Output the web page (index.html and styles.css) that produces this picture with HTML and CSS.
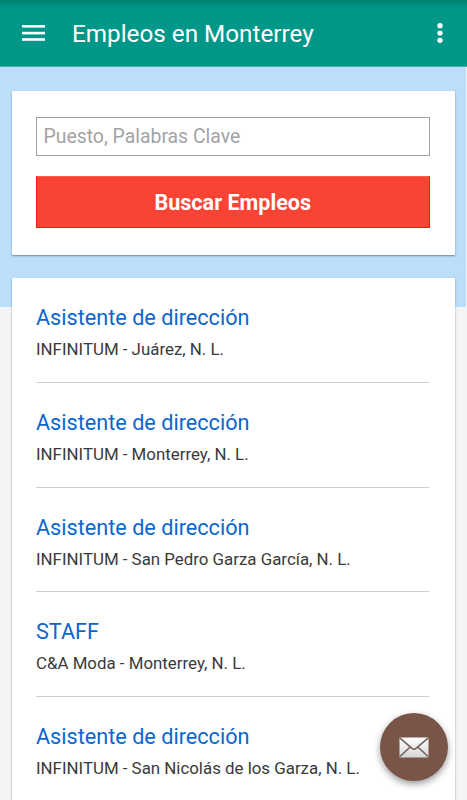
FILE: index.html
```html
<!DOCTYPE html>
<html lang="es">
<head>
    <meta charset="UTF-8">
    <meta name="viewport" content="width=device-width, initial-scale=1.0">
    <title>Empleos en Monterrey</title>
    <link rel="stylesheet" href="styles.css">
</head>
<body>

    <header class="toolbar">
        <button class="icon-btn menu-btn" aria-label="Menú">
            <svg width="23" height="16" viewBox="0 0 23 16" fill="#fff">
                <rect width="23" height="2.6"/>
                <rect y="6.8" width="23" height="2.6"/>
                <rect y="13.2" width="23" height="2.6"/>
            </svg>
        </button>
        <h1 class="title">Empleos en Monterrey</h1>
        <button class="icon-btn more-btn" aria-label="Más opciones">
            <svg width="6" height="20" viewBox="0 0 6 20" fill="#fff">
                <circle cx="3" cy="2.7" r="2.6"/>
                <circle cx="3" cy="10" r="2.6"/>
                <circle cx="3" cy="17.3" r="2.6"/>
            </svg>
        </button>
    </header>

    <main class="content">
        <form class="card search">
            <input class="search-input" type="text" placeholder="Puesto, Palabras Clave">
            <button class="search-btn" type="button">Buscar Empleos</button>
        </form>

        <div class="card jobs">
            <div class="job">
                <a class="job-title">Asistente de dirección</a>
                <p class="job-place">INFINITUM - Juárez, N. L.</p>
            </div>
            <div class="job">
                <a class="job-title">Asistente de dirección</a>
                <p class="job-place">INFINITUM - Monterrey, N. L.</p>
            </div>
            <div class="job">
                <a class="job-title">Asistente de dirección</a>
                <p class="job-place">INFINITUM - San Pedro Garza García, N. L.</p>
            </div>
            <div class="job">
                <a class="job-title">STAFF</a>
                <p class="job-place">C&amp;A Moda - Monterrey, N. L.</p>
            </div>
            <div class="job">
                <a class="job-title">Asistente de dirección</a>
                <p class="job-place">INFINITUM - San Nicolás de los Garza, N. L.</p>
            </div>
        </div>
    </main>

    <button class="fab" aria-label="Correo">
        <svg width="30" height="21" viewBox="0 0 30 21">
            <defs>
                <linearGradient id="paper" x1="0" y1="0" x2="0" y2="1">
                    <stop offset="0" stop-color="#fff"/>
                    <stop offset="1" stop-color="#d6d6d6"/>
                </linearGradient>
            </defs>
            <rect x="0.5" y="0.5" width="29" height="20" rx="1" fill="url(#paper)"/>
            <path d="M1 1.2 L13 11.4 Q15 13 17 11.4 L29 1.2 M1 19.5 L11.2 10 M29 19.5 L18.8 10" fill="none" stroke="#75655d" stroke-width="1.7"/>
        </svg>
    </button>

</body>
</html>
```

FILE: styles.css
```css
* {
    box-sizing: border-box;
}
body {
    font-family: Roboto, "Liberation Sans", sans-serif;
    background: linear-gradient(#bbdefb, #bbdefb) no-repeat 0 0 / 466px 307px, #f4f4f4;
    color: #3a3a3a;
    margin: 0;
    height: 800px;
    overflow: hidden;
}
.toolbar {
    display: flex;
    align-items: center;
    height: 67px;
    padding: 0 24px 0 22px;
    background: linear-gradient(#00806f, #009688 8px);
    border-bottom: 1px solid #5ba8a8;
    color: #fff;
}
.icon-btn {
    display: flex;
    padding: 0;
    border: none;
    background: none;
}
.title {
    flex: 1;
    margin: 2px 0 0 27px;
    font-size: 24.25px;
    font-weight: 400;
    line-height: 30px;
    white-space: nowrap;
}
.content {
    padding: 24px 12.5px 0 12px;
}
.card {
    background: #fff;
    border-radius: 1px;
    box-shadow: 0 1px 2px rgba(0, 0, 0, 0.4);
    padding: 0 26px 0 24px;
}
.search {
    height: 163.5px;
    padding: 26px 24.5px 0 23.5px;
    margin-bottom: 23.5px;
}
.search-input {
    display: block;
    width: 100%;
    height: 39px;
    padding: 0 7px;
    border: 1px solid #a0a0a0;
    border-radius: 0;
    font-family: inherit;
    font-size: 19.4px;
    outline: none;
}
.search-input::placeholder {
    color: #a3a3a3;
}
.search-btn {
    display: block;
    width: 100%;
    height: 52px;
    margin-top: 20px;
    padding: 0;
    border: 1px solid #f0190c;
    border-top-color: #fb5c4e;
    background: #f94435;
    color: #fff;
    font-family: inherit;
    font-size: 21.6px;
    font-weight: 700;
}
.jobs {
    height: 560px;
}
.job {
    height: 104.8px;
    padding-top: 26px;
    border-bottom: 1px solid #ccd0d0;
}
.job-title {
    display: block;
    color: #0b66d0;
    font-size: 21.65px;
    line-height: 28px;
}
.job-place {
    margin: 6px 0 0;
    font-size: 16.86px;
    line-height: 23px;
}
.fab {
    position: fixed;
    right: 19px;
    bottom: 19px;
    display: flex;
    align-items: center;
    justify-content: center;
    width: 68px;
    height: 68px;
    padding: 0;
    border: none;
    border-radius: 50%;
    background: #795548;
    box-shadow: 0 3px 7px rgba(0, 0, 0, 0.4);
}
```
